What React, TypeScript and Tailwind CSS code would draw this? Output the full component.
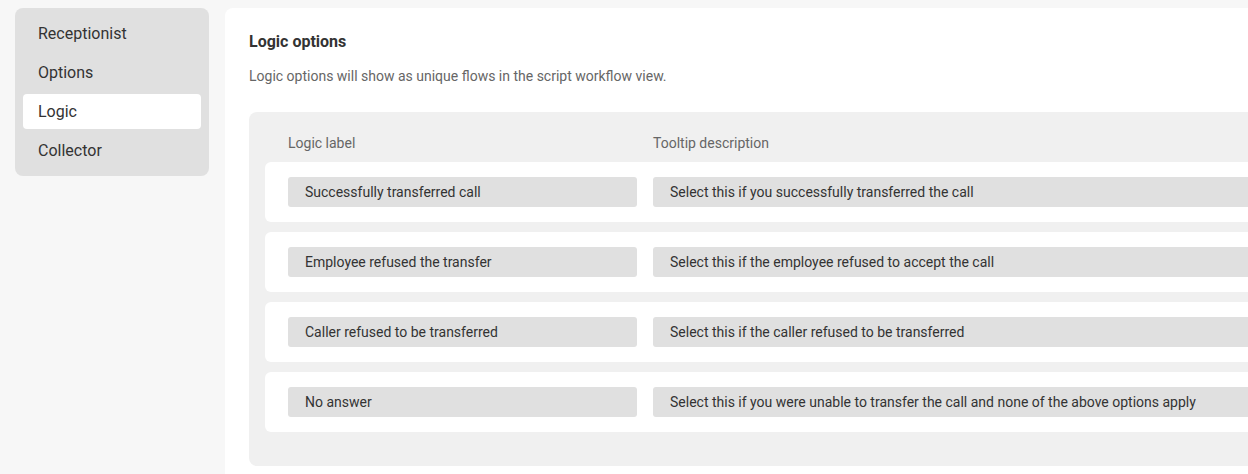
const navItems = ["Receptionist", "Options", "Logic", "Collector"];

const logicRows = [
  { label: "Successfully transferred call", tooltip: "Select this if you successfully transferred the call" },
  { label: "Employee refused the transfer", tooltip: "Select this if the employee refused to accept the call" },
  { label: "Caller refused to be transferred", tooltip: "Select this if the caller refused to be transferred" },
  { label: "No answer", tooltip: "Select this if you were unable to transfer the call and none of the above options apply" },
];

export default function App() {
  return (
    <div
      className="flex h-[474px] w-[1248px] items-start gap-4 overflow-hidden bg-[#f7f7f7] pl-[15px] pt-2"
      style={{ fontFamily: "Roboto, 'Liberation Sans', sans-serif" }}
    >
      <nav className="flex w-[194px] shrink-0 flex-col gap-1 rounded-lg bg-[#e0e0e0] px-2 py-2">
        {navItems.map((item) => (
          <div
            key={item}
            className={`flex h-[35px] items-center rounded px-[15px] text-base text-[#333] ${
              item === "Logic" ? "bg-white" : ""
            }`}
          >
            {item}
          </div>
        ))}
      </nav>

      <main className="h-[520px] w-[1100px] shrink-0 rounded-lg bg-white px-6 pt-6">
        <h2 className="text-base font-bold leading-5 text-[#333]">Logic options</h2>
        <p className="mt-[14px] text-sm leading-5 text-[#666]">
          Logic options will show as unique flows in the script workflow view.
        </p>

        <section className="mt-[26px] rounded-lg bg-[#f0f0f0] px-4 pb-[34px] pt-[21px]">
          <div className="flex gap-4 pl-[23px] text-sm leading-5 text-[#666]">
            <div className="w-[349px] shrink-0">Logic label</div>
            <div>Tooltip description</div>
          </div>

          <div className="mt-[9px] flex flex-col gap-[10px]">
            {logicRows.map((row) => (
              <div key={row.label} className="flex gap-4 rounded-md bg-white px-[23px] py-[15px]">
                <div className="flex h-[30px] w-[349px] shrink-0 items-center rounded-[3px] bg-[#e0e0e0] px-[17px] text-sm text-[#333]">
                  {row.label}
                </div>
                <div className="flex h-[30px] flex-1 items-center rounded-[3px] bg-[#e0e0e0] px-[17px] text-sm text-[#333]">
                  {row.tooltip}
                </div>
              </div>
            ))}
          </div>
        </section>
      </main>
    </div>
  );
}
